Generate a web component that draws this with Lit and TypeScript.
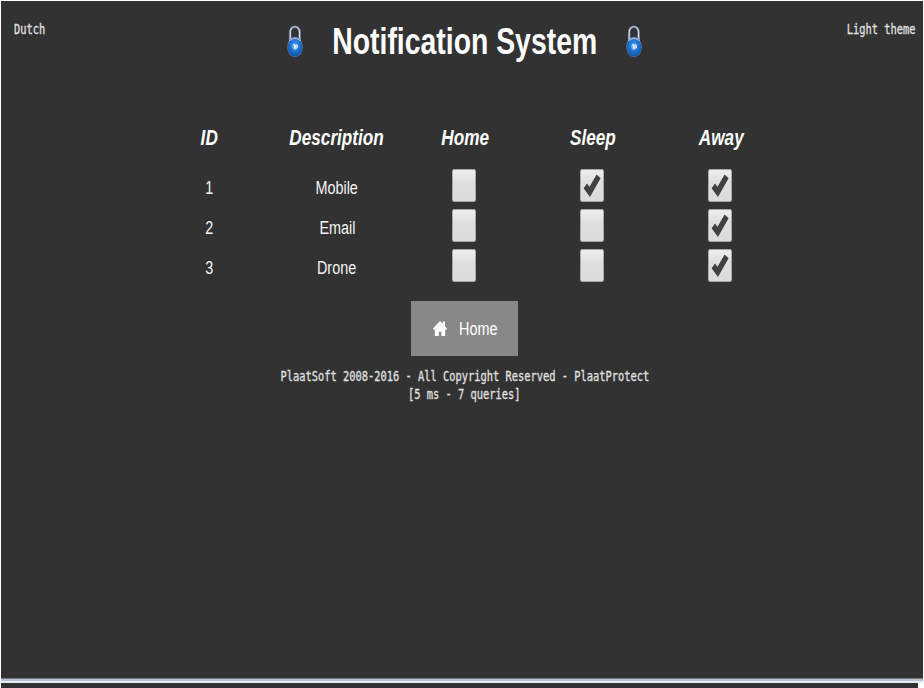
import { LitElement, html, svg, css } from "lit";
import { customElement, property } from "lit/decorators.js";

@customElement("pad-lock")
class PadLock extends LitElement {
  static styles = css`
    :host { display: block; width: 17px; height: 34px; }
    svg { display: block; width: 17px; height: 34px; }
  `;
  render() {
    return html`<svg viewBox="0 0 17 34">
      <defs>
        <radialGradient id="body" cx="0.5" cy="0.4" r="0.6">
          <stop offset="0" stop-color="#3f97ec" />
          <stop offset="0.6" stop-color="#1b70cc" />
          <stop offset="1" stop-color="#0f4fa2" />
        </radialGradient>
      </defs>
      <path d="M3.2 17V8.5C3.2 0.8 12.6 0.8 12.6 8.5V17" fill="none" stroke="#66748c" stroke-width="2.6" />
      <path d="M3.2 17V8.5C3.2 0.8 12.6 0.8 12.6 8.5V17" fill="none" stroke="#cfd8e6" stroke-width="1.2" />
      <ellipse cx="8" cy="23" rx="7.7" ry="10.2" fill="#6f8fbb" />
      <ellipse cx="8" cy="23.2" rx="7.3" ry="9.6" fill="url(#body)" />
      <path d="M2.4 16.8Q8 12 13.6 16.8" fill="none" stroke="#a9bdd8" stroke-width="1.2" />
      <ellipse cx="8" cy="22.6" rx="2.8" ry="3.4" fill="#6eaaf0" />
      <path d="M6 20.8H7.6V24.8M8.8 24.8V21H10.2V24" fill="none" stroke="#edf5ff" stroke-width="1" />
    </svg>`;
  }
}

@customElement("check-cell")
class CheckCell extends LitElement {
  @property({ type: Boolean }) checked = false;
  static styles = css`
    :host { display: block; padding-right: 2px; }
    .box {
      box-sizing: border-box; width: 24px; height: 33px;
      border: 1px solid #aaa; border-radius: 2px;
      background: linear-gradient(#eee, #dedede 45%, #dcdcdc);
    }
    svg { display: block; width: 22px; height: 31px; }
  `;
  render() {
    return html`<div class="box">
      <svg viewBox="0 0 22 31">
        ${this.checked ? svg`<path d="M2.6 18.2L6 13.4L8.6 16.8L15.6 4.6L19.6 8.2L9 27Z" fill="#404040" />` : ""}
      </svg>
    </div>`;
  }
}

@customElement("app-root")
class AppRoot extends LitElement {
  static styles = css`
    :host {
      display: flex; flex-direction: column; box-sizing: border-box;
      width: 924px; height: 688px; overflow: hidden;
      background: #323232; color: #fff;
      border-top: 1px solid #fff; border-left: 1px solid #fff; border-right: 1px solid #fff;
      font-family: "Liberation Sans", Arial, sans-serif;
    }
    .page { flex: 1; display: flex; flex-direction: column; }
    .narrow { display: inline-block; white-space: nowrap; transform: scaleX(0.767); }
    .mono {
      font: 13.5px/18px "DejaVu Sans Mono", monospace; color: #e0e0e0;
      -webkit-text-stroke: 0.3px #e0e0e0;
      display: inline-block; white-space: nowrap; transform: scaleX(0.769);
    }
    .left { transform-origin: left; }
    .right { transform-origin: right; }
    header { display: grid; grid-template-columns: 150px 1fr 150px; height: 110px; padding: 0 8px 0 13px; }
    .corner { padding-top: 19px; }
    .end { text-align: right; }
    .title { display: flex; justify-content: center; align-items: flex-start; padding-top: 23px; }
    h1 { margin: 0; width: 322px; text-align: center; font-size: 37px; line-height: 36px; display: flex; justify-content: center; }
    .grid { display: grid; grid-template-columns: repeat(5, 128px); margin-left: 144px; justify-items: center; align-items: center; }
    .heads { height: 54px; font-size: 22.4px; font-weight: bold; font-style: italic; }
    .row { height: 40.2px; font-size: 18.8px; color: #f4f4f4; }
    .row .narrow { padding-top: 5px; }
    .btn {
      align-self: flex-start; margin: 15px 0 0 410px; width: 107px; height: 55px;
      background: #888; display: flex; align-items: center; font-size: 18.8px;
    }
    .btn svg { width: 14px; height: 15px; margin-left: 22px; }
    .btn .narrow { margin-left: 12px; padding-top: 2px; transform-origin: left; }
    footer { display: flex; flex-direction: column; align-items: center; margin-top: 11px; padding-left: 5px; }
    .rule { height: 5px; background: linear-gradient(#777 0 1px, #b9c4d0 1px 3px, #e6eef6 3px 5px); }
    .strip { height: 5px; background: #323232; border-right: 5px solid #fff; }
  `;

  heads = ["ID", "Description", "Home", "Sleep", "Away"];
  rows = [
    { id: 1, name: "Mobile", on: [false, true, true] },
    { id: 2, name: "Email", on: [false, false, true] },
    { id: 3, name: "Drone", on: [false, false, true] },
  ];

  render() {
    return html`
      <div class="page">
        <header>
          <div class="corner"><span class="mono left">Dutch</span></div>
          <div class="title">
            <pad-lock></pad-lock>
            <h1><span class="narrow">Notification System</span></h1>
            <pad-lock></pad-lock>
          </div>
          <div class="corner end"><span class="mono right">Light theme</span></div>
        </header>
        <div class="grid heads">${this.heads.map((h) => html`<span class="narrow">${h}</span>`)}</div>
        ${this.rows.map(
          (r) => html`<div class="grid row">
            <span class="narrow">${r.id}</span>
            <span class="narrow">${r.name}</span>
            ${r.on.map((v) => html`<check-cell ?checked=${v}></check-cell>`)}
          </div>`
        )}
        <div class="btn">
          <svg viewBox="0 0 14 15">
            <path d="M7 0L14 7.4L12.6 9.2L7 3.2L1.4 9.2L0 7.4Z" fill="#fff" />
            <path d="M9.8 0.6H12V5H9.8ZM7 3.4L12.2 9V15H8.4V10.8H5.8V15H1.8V9Z" fill="#fff" />
          </svg>
          <span class="narrow">Home</span>
        </div>
        <footer>
          <span class="mono">PlaatSoft 2008-2016 - All Copyright Reserved - PlaatProtect</span>
          <span class="mono">[5 ms - 7 queries]</span>
        </footer>
      </div>
      <div class="rule"></div>
      <div class="strip"></div>
    `;
  }
}
